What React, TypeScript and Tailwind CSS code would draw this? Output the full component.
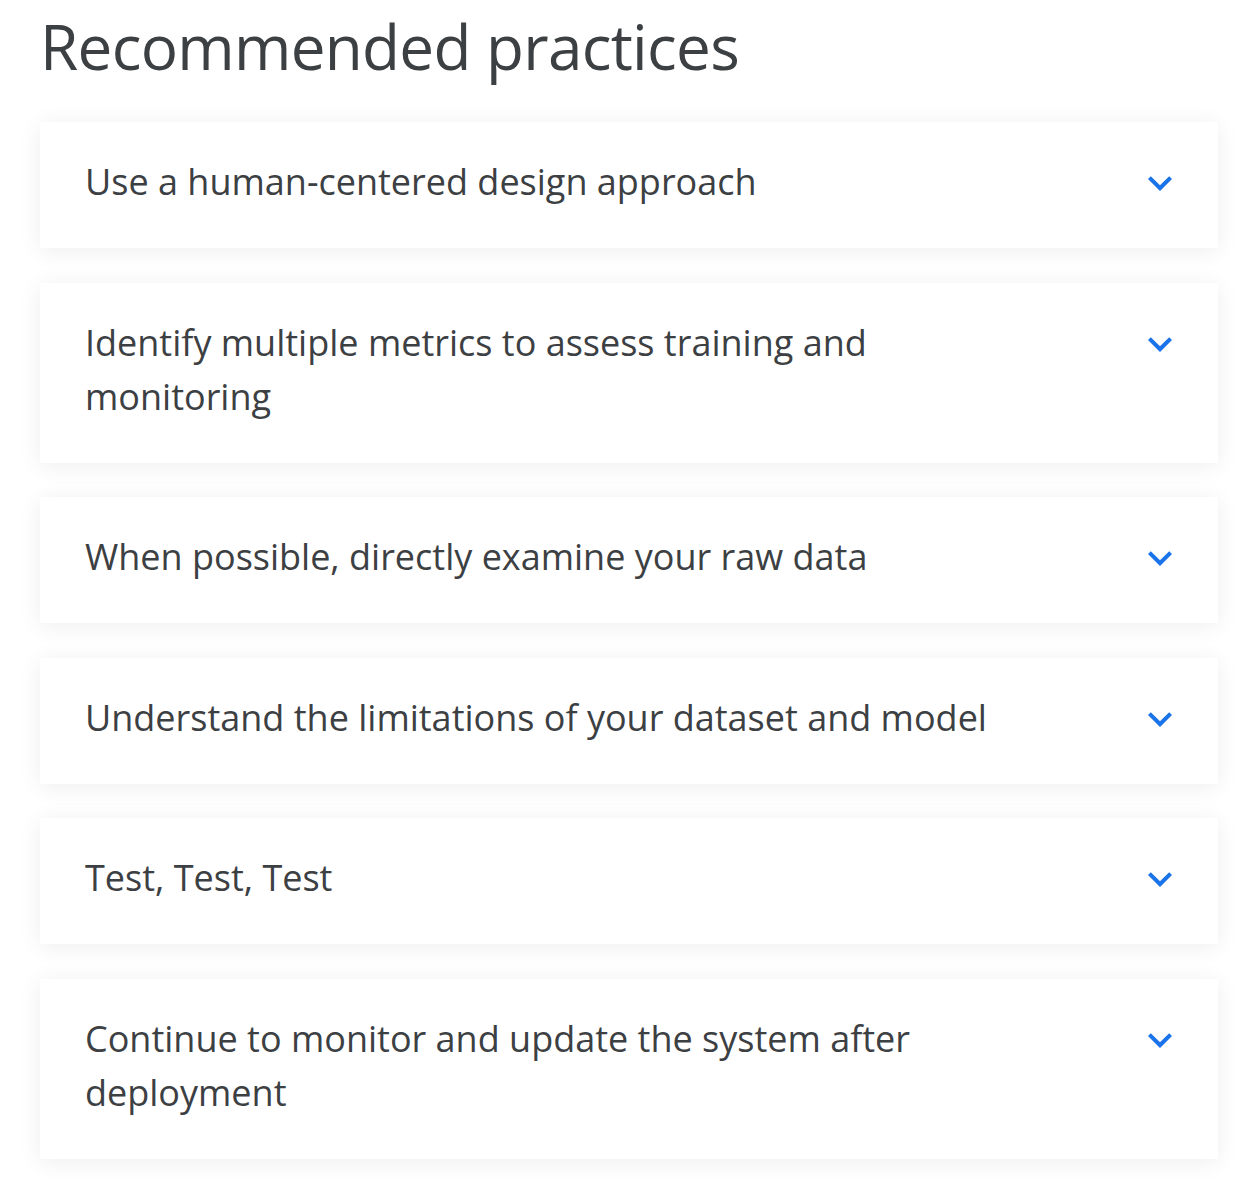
const practices = [
  'Use a human-centered design approach',
  'Identify multiple metrics to assess training and monitoring',
  'When possible, directly examine your raw data',
  'Understand the limitations of your dataset and model',
  'Test, Test, Test',
  'Continue to monitor and update the system after deployment',
];

function ExpandMore() {
  return (
    <svg viewBox="0 0 24 24" className="mt-1 size-12 shrink-0" fill="#1a73e8">
      <path d="M16.59 8.59L12 13.17 7.41 8.59 6 10l6 6 6-6z" />
    </svg>
  );
}

function PracticeCard({ title }: { title: string }) {
  return (
    <div className="flex items-start bg-white pl-[45px] pr-[34px] pt-[33px] pb-[39px] shadow-[0_3px_22px_rgba(0,0,0,0.07)]">
      <p className="flex-1 pr-[111px] text-[36px] leading-[54px] text-[#3c4043]">{title}</p>
      <ExpandMore />
    </div>
  );
}

export default function App() {
  return (
    <div className="min-h-[1186px] bg-white pl-10 pr-9 pt-[15px] font-['Open_Sans',sans-serif]">
      <h2 className="text-[62px] leading-[62px] text-[#3c4043] tracking-[-0.7px]">Recommended practices</h2>
      <div className="mt-[45px] flex flex-col gap-[34.6px]">
        {practices.map((p) => (
          <PracticeCard key={p} title={p} />
        ))}
      </div>
    </div>
  );
}
